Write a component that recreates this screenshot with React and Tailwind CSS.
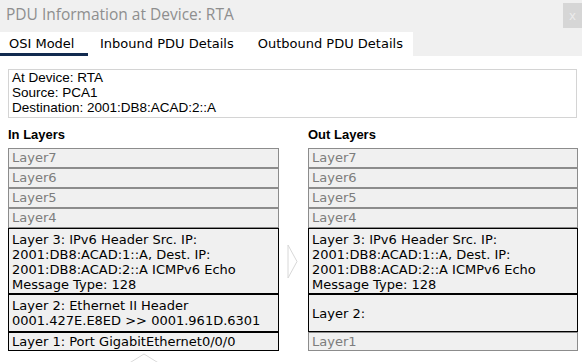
import React from "react";

const verdana = { fontFamily: '"DejaVu Sans", Verdana, sans-serif' };

function GrayLayer({ label }) {
  return (
    <div className="h-[20px] border border-[#8c8c8c] bg-[#f0f0f0] pl-[3px] text-[13px] leading-[18px] text-[#7d7d7d]">
      {label}
    </div>
  );
}

export default function App() {
  return (
    <div className="w-[582px] h-[362px] overflow-hidden bg-white relative">
      {/* title bar */}
      <div className="h-[32px] bg-[#f0f0f0] flex items-start justify-between">
        <div
          className="pl-[6px] pt-[4px] text-[15.5px] leading-[20px] text-[#8e8e8e]"
          style={{ fontFamily: '"Open Sans", sans-serif' }}
        >
          PDU Information at Device: RTA
        </div>
        <div className="mt-[3px] w-[19px] h-[25px] bg-[#d6d6d6] flex items-center justify-center text-[#ececec] text-[13px] leading-none" style={{ fontFamily: '"Liberation Sans", sans-serif' }}>
          x
        </div>
      </div>
      {/* tabs */}
      <div className="h-[24px] bg-[#f0f0f0] flex" style={verdana}>
        <div className="w-[413px] bg-white flex text-[13px] text-black">
          <div className="w-[88px] pl-[9px] pt-[4px] border-b-[3px] border-[#122a4f] leading-[16px]">OSI Model</div>
          <div className="pl-[12px] pt-[4px] leading-[16px]">Inbound PDU Details</div>
          <div className="pl-[24px] pt-[4px] leading-[16px]">Outbound PDU Details</div>
        </div>
      </div>
      {/* content */}
      <div className="px-[8px] pt-[13px]">
        <div
          className="w-[569px] h-[49px] border border-[#d4d4d4] pl-[3px] text-[13.5px] leading-[15px] text-black"
          style={{ fontFamily: '"Liberation Sans", Arial, sans-serif' }}
        >
          <div>At Device: RTA</div>
          <div>Source: PCA1</div>
          <div>Destination: 2001:DB8:ACAD:2::A</div>
        </div>
        <div className="grid grid-cols-[271px_29px_270px]">
          <div className="pt-[9px] pb-[6px] text-[13px] leading-[15px] font-bold text-black" style={{ fontFamily: '"Liberation Sans", Arial, sans-serif' }}>
            In Layers
          </div>
          <div />
          <div className="pt-[9px] pb-[6px] text-[13px] leading-[15px] font-bold text-black" style={{ fontFamily: '"Liberation Sans", Arial, sans-serif' }}>
            Out Layers
          </div>

          {/* left column */}
          <div className="flex flex-col" style={verdana}>
            <GrayLayer label="Layer7" />
            <GrayLayer label="Layer6" />
            <GrayLayer label="Layer5" />
            <GrayLayer label="Layer4" />
            <div className="h-[66px] border border-black bg-[#f0f0f0] pl-[3px] pt-[3px] text-[13px] leading-[15px] text-black">
              Layer 3: IPv6 Header Src. IP:
              <br />
              2001:DB8:ACAD:1::A, Dest. IP:
              <br />
              2001:DB8:ACAD:2::A ICMPv6 Echo
              <br />
              Message Type: 128
            </div>
            <div className="h-[38px] border border-black bg-[#f0f0f0] pl-[3px] pt-[3px] text-[13px] leading-[15px] text-black">
              Layer 2: Ethernet II Header
              <br />
              0001.427E.E8ED &gt;&gt; 0001.961D.6301
            </div>
            <div className="h-[19px] border border-black bg-[#f0f0f0] pl-[3px] text-[13px] leading-[17px] text-black">
              Layer 1: Port GigabitEthernet0/0/0
            </div>
            <div className="flex justify-center pt-[2px]">
              <svg width="36" height="12" viewBox="0 0 36 12">
                <polygon points="1,11.5 18,1 35,11.5" fill="none" stroke="#dadada" strokeWidth="1" />
              </svg>
            </div>
          </div>

          {/* middle chevron */}
          <div className="flex justify-center pt-[96px]">
            <svg width="11" height="35" viewBox="0 0 11 35" className="ml-[-2px]">
              <polygon points="1,1 10,17.5 1,34" fill="none" stroke="#d8d8d8" strokeWidth="1" />
            </svg>
          </div>

          {/* right column */}
          <div className="flex flex-col" style={verdana}>
            <GrayLayer label="Layer7" />
            <GrayLayer label="Layer6" />
            <GrayLayer label="Layer5" />
            <GrayLayer label="Layer4" />
            <div className="h-[66px] border border-black bg-[#f0f0f0] pl-[3px] pt-[3px] text-[13px] leading-[15px] text-black">
              Layer 3: IPv6 Header Src. IP:
              <br />
              2001:DB8:ACAD:1::A, Dest. IP:
              <br />
              2001:DB8:ACAD:2::A ICMPv6 Echo
              <br />
              Message Type: 128
            </div>
            <div className="h-[38px] border border-black bg-[#f0f0f0] pl-[3px] flex items-center text-[13px] leading-[15px] text-black">
              Layer 2:
            </div>
            <div className="h-[19px] border border-[#8c8c8c] bg-[#f0f0f0] pl-[3px] text-[13px] leading-[17px] text-[#7d7d7d]">
              Layer1
            </div>
          </div>
        </div>
      </div>
    </div>
  );
}
